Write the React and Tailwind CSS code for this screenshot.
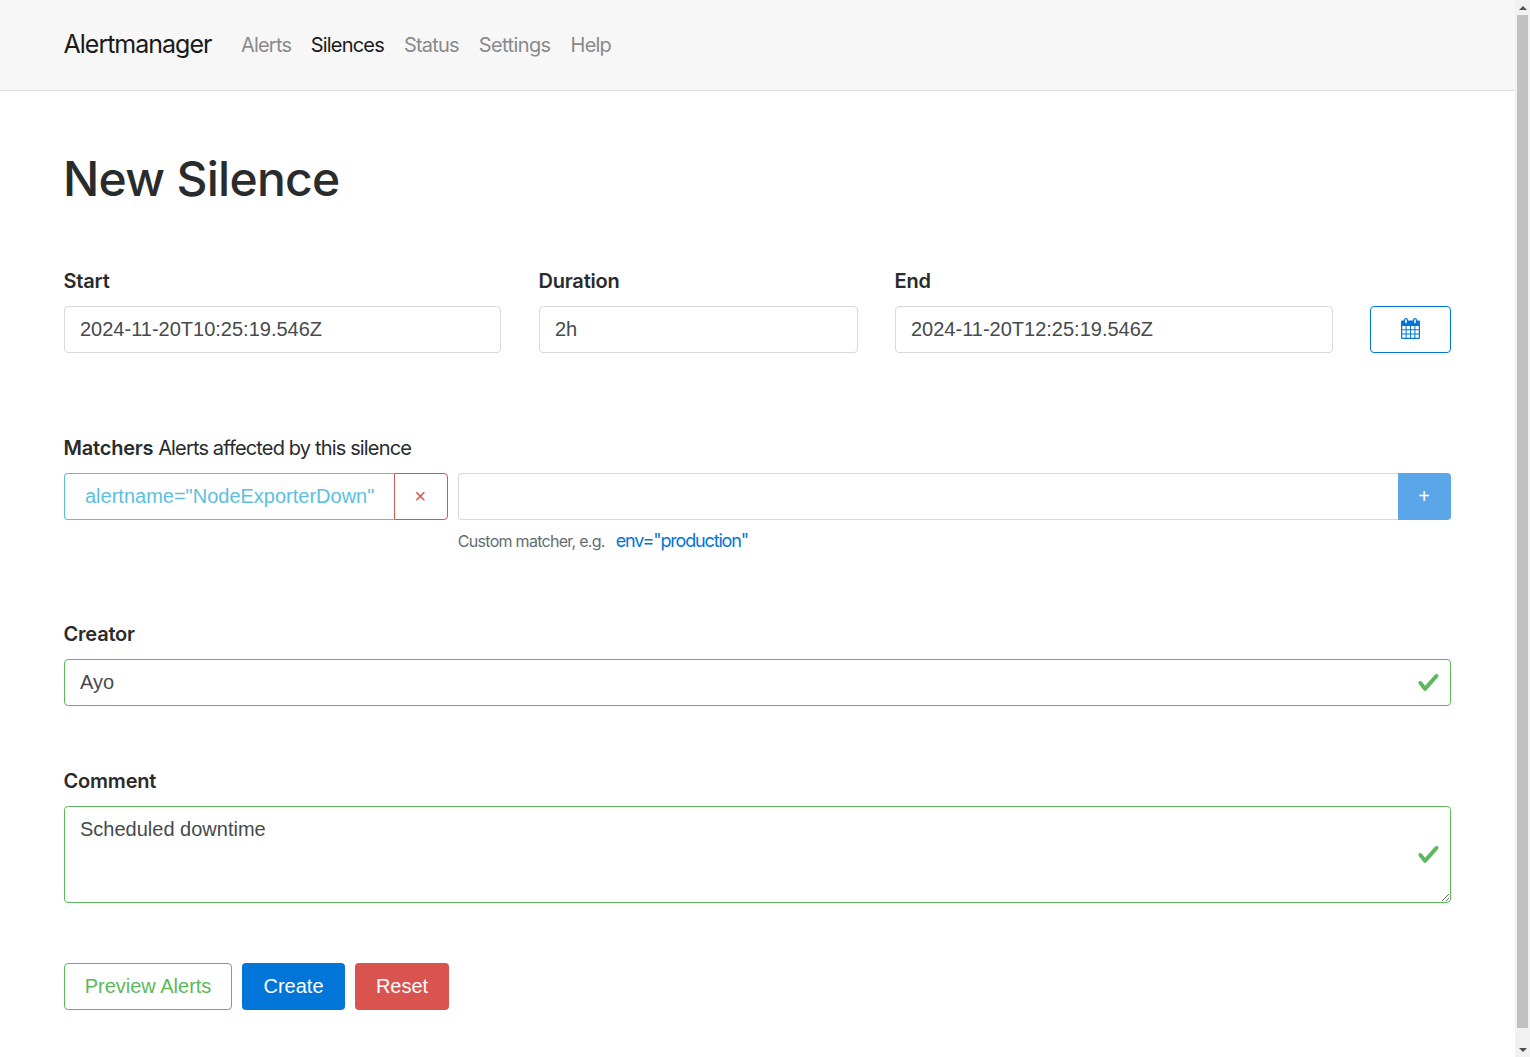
import React from "react";

const inter = "font-['Inter',sans-serif]";
const lib = "font-['Liberation_Sans',sans-serif]";
const inputBase = `h-[47px] w-full rounded-[4px] border border-[#d9d9d9] bg-white px-[15px] text-[20px] text-[#464a4c] outline-none ${lib}`;

function Check({ className = "" }) {
  return (
    <svg viewBox="0 0 8 8" className={`h-[23px] w-[23px] ${className}`} aria-hidden="true">
      <path fill="#5cb85c" d="M2.3 6.73L.6 4.53c-.4-1.04.46-1.4 1.1-.8l1.1 1.4 3.4-3.8c.6-.63 1.6-.27 1.2.7l-4 4.6c-.43.5-.8.4-1.1.1z" />
    </svg>
  );
}

function Calendar() {
  return (
    <svg viewBox="0 0 19 21" className="-mt-[2px] h-[21px] w-[19px]" aria-hidden="true">
      <path fill="#0275d8" fillRule="evenodd" d="M1 2.5h17a1 1 0 0 1 1 1V20a1 1 0 0 1-1 1H1a1 1 0 0 1-1-1V3.5a1 1 0 0 1 1-1zM1.2 8v3.2h3.4V8zm4.4 0v3.2h3.4V8zm4.4 0v3.2h3.4V8zm4.4 0v3.2h3.4V8zM1.2 12.2v3.2h3.4v-3.2zm4.4 0v3.2h3.4v-3.2zm4.4 0v3.2h3.4v-3.2zm4.4 0v3.2h3.4v-3.2zM1.2 16.4v3.4h3.4v-3.4zm4.4 0v3.4h3.4v-3.4zm4.4 0v3.4h3.4v-3.4zm4.4 0v3.4h3.4v-3.4z" />
      <rect x="3" y="0" width="4" height="6" rx="2" fill="#0275d8" />
      <rect x="12" y="0" width="4" height="6" rx="2" fill="#0275d8" />
      <rect x="4.2" y="1.2" width="1.6" height="4" rx="0.8" fill="#ffffff" />
      <rect x="13.2" y="1.2" width="1.6" height="4" rx="0.8" fill="#ffffff" />
    </svg>
  );
}

function Scrollbar() {
  return (
    <div className="flex h-[1057px] w-[15px] shrink-0 flex-col items-center bg-[#f1f1f1]">
      <div className="flex h-[15px] w-full items-center justify-center">
        <div className="h-0 w-0 border-x-[4px] border-b-[4px] border-x-transparent border-b-[#505050]" />
      </div>
      <div className="w-full flex-1 px-[2px]">
        <div className="h-[1013px] w-full bg-[#c1c1c1]" />
      </div>
      <div className="flex h-[15px] w-full items-center justify-center">
        <div className="h-0 w-0 border-x-[4px] border-t-[4px] border-x-transparent border-t-[#505050]" />
      </div>
    </div>
  );
}

function Label({ children, className = "" }) {
  return <label className={`-ml-[0.5px] block text-[20px] font-semibold leading-[30px] tracking-[-0.01em] text-[#292b2c] ${inter} ${className}`}>{children}</label>;
}

export default function App() {
  return (
    <div className="flex h-[1057px] w-full overflow-hidden bg-white">
      <div className="min-w-0 flex-1">
        <nav className={`flex h-[91px] items-center border-b border-[#dcdcdc] bg-[#f7f7f7] pl-[63.5px] ${inter}`}>
          <span className="mr-[29.5px] text-[25px] tracking-[-0.04em] text-[#1a1a1a]">Alertmanager</span>
          <ul className="flex gap-[20px] text-[20px] tracking-[-0.04em] text-[#8a8a8a]">
            <li>Alerts</li>
            <li className="-ml-[0.5px] text-[#1a1a1a]">Silences</li>
            <li>Status</li>
            <li className="tracking-[-0.03em]">Settings</li>
            <li>Help</li>
          </ul>
        </nav>
        <main className="px-[64px]">
          <h1 className={`-ml-[1px] mt-[58px] text-[48px] font-medium leading-[60px] tracking-[-0.015em] text-[#292b2c] ${inter}`}>New Silence</h1>

          <div className="mt-[57px] flex items-end">
            <div className="w-[437px]">
              <Label>Start</Label>
              <input readOnly value="2024-11-20T10:25:19.546Z" className={`mt-[10px] ${inputBase}`} />
            </div>
            <div className="ml-[38px] w-[319px]">
              <Label>Duration</Label>
              <input readOnly value="2h" className={`mt-[10px] ${inputBase}`} />
            </div>
            <div className="ml-[37px] w-[438px]">
              <Label>End</Label>
              <input readOnly value="2024-11-20T12:25:19.546Z" className={`mt-[10px] ${inputBase}`} />
            </div>
            <button className="ml-[37px] flex h-[47px] w-[81px] items-center justify-center rounded-[4px] border border-[#0275d8] bg-white">
              <Calendar />
            </button>
          </div>

          <div className="mt-[80px]">
            <div className={`-ml-[0.5px] text-[20px] leading-[30px] tracking-[-0.0425em] text-[#292b2c] ${inter}`}>
              <strong className="font-semibold tracking-[-0.01em]">Matchers</strong> Alerts affected by this silence
            </div>
            <div className="mt-[10px] flex gap-[10px]">
              <div className={`flex h-[47px] text-[20px] ${lib}`}>
                <span className="flex items-center rounded-l-[4px] border border-r-0 border-[#5bc0de] bg-white px-[20px] pb-[2px] text-[#5bc0de]">alertname="NodeExporterDown"</span>
                <button className="flex w-[54px] items-center justify-center rounded-r-[4px] border border-[#d9534f] bg-white pb-[2px] pr-[2px] text-[#d9534f]">×</button>
              </div>
              <div className="min-w-0 flex-1">
                <div className="flex h-[47px]">
                  <input readOnly className="h-[47px] min-w-0 flex-1 rounded-l-[4px] border border-r-0 border-[#d9d9d9] bg-white outline-none" />
                  <button className={`flex w-[53px] items-center justify-center rounded-r-[4px] bg-[#5aa6e8] pb-[2px] pr-[1px] text-[20px] text-white ${lib}`}>+</button>
                </div>
                <div className={`-ml-[0.5px] mt-[8px] flex items-center leading-[26px] tracking-[-0.045em] ${inter}`}>
                  <span className="text-[16px] text-[#636c72]">Custom matcher, e.g.</span>
                  <a className="ml-[11px] text-[18px] tracking-[-0.065em] text-[#0275d8]">env="production"</a>
                </div>
              </div>
            </div>
          </div>

          <div className="mt-[65px]">
            <Label>Creator</Label>
            <div className="relative mt-[10px]">
              <input readOnly value="Ayo" className={`${inputBase} !border-[#5cb85c]`} />
              <Check className="absolute right-[11px] top-[12px]" />
            </div>
          </div>

          <div className="mt-[60px]">
            <Label>Comment</Label>
            <div className="relative mt-[10px]">
              <textarea readOnly value="Scheduled downtime" className={`block h-[97px] w-full rounded-[4px] border border-[#5cb85c] bg-white px-[15px] py-[9px] text-[20px] leading-[26px] text-[#464a4c] outline-none ${lib}`} />
              <Check className="absolute right-[11px] top-[37px]" />
            </div>
          </div>

          <div className={`mt-[60px] flex text-[20px] ${lib}`}>
            <button className="h-[47px] w-[168px] rounded-[4px] border border-[#5cb85c] bg-white pb-[2px] text-[#5cb85c]">Preview Alerts</button>
            <button className="ml-[10px] h-[47px] w-[103px] rounded-[4px] bg-[#0275d8] pb-[2px] text-white">Create</button>
            <button className="ml-[10px] h-[47px] w-[94px] rounded-[4px] bg-[#d9534f] pb-[2px] text-white">Reset</button>
          </div>
        </main>
      </div>
      <Scrollbar />
    </div>
  );
}
